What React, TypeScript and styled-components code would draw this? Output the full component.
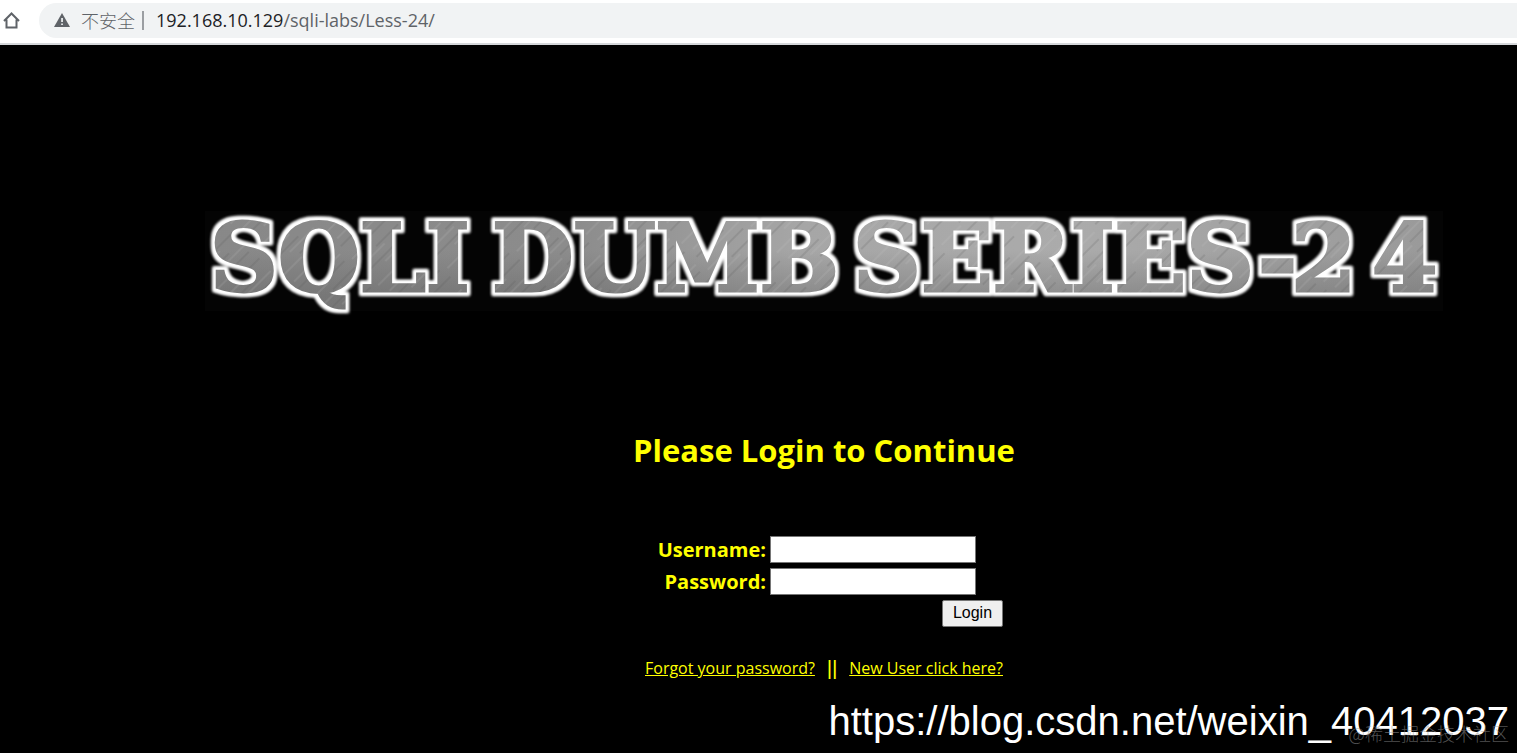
import React from "react";
import styled, { createGlobalStyle } from "styled-components";

const GlobalStyle = createGlobalStyle`
  * { box-sizing: border-box; }
  html, body, #root { min-height: 100vh; }
  body {
    margin: 0;
    background: #000;
    font-family: "Open Sans", "Noto Sans", "Noto Sans CJK SC", sans-serif;
  }
`;

const Page = styled.div`
  display: flex;
  flex-direction: column;
  min-height: 100vh;
  position: relative;
`;

const BrowserBar = styled.header`
  display: flex;
  align-items: center;
  gap: 17px;
  height: 45px;
  padding: 0 0 3px 2px;
  background: #fff;
  border-bottom: 2px solid #d5d7da;
`;

const IconButton = styled.button`
  display: flex;
  padding: 0;
  border: 0;
  background: none;
  color: #5f6368;
`;

const AddressBar = styled.div`
  display: flex;
  flex: 1;
  align-items: center;
  height: 35px;
  padding-left: 15px;
  border-radius: 18px 0 0 18px;
  background: #f1f3f4;
  color: #5f6368;
  font-size: 18px;
  line-height: 24px;
  white-space: nowrap;
`;

const Security = styled.span`
  margin-left: 11px;
  padding-right: 7px;
  font-family: "Noto Sans CJK SC", sans-serif;
  font-weight: 300;
`;

const Divider = styled.span`
  width: 2px;
  height: 19px;
  margin-right: 12px;
  background: #9b9ea2;
`;

const Host = styled.span`
  color: #202124;
`;

const Main = styled.main`
  display: flex;
  flex: 1;
  flex-direction: column;
  align-items: center;
  padding: 156px 0 0 131px;
  color: #ff0;
`;

const Banner = styled.svg`
  display: block;
  width: 90%;
  max-width: 1238px;
`;

const Title = styled.h1`
  margin: 109px 0 0;
  font-size: 31px;
  line-height: 44px;
  font-weight: 700;
`;

const LoginForm = styled.form`
  display: flex;
  flex-direction: column;
  gap: 5px;
  width: 358px;
  margin-top: 64px;
`;

const Field = styled.div`
  display: grid;
  grid-template-columns: 121px 206px;
  column-gap: 4px;
  align-items: center;
`;

const Label = styled.label`
  padding-top: 1px;
  font-size: 20px;
  line-height: 26px;
  font-weight: 700;
  text-align: right;
`;

const Input = styled.input`
  width: 100%;
  height: 27px;
  padding: 1px 2px;
  border: 1px solid #767676;
  border-radius: 0;
  background: #fff;
  font-size: 16px;
`;

const LoginButton = styled.button`
  align-self: flex-end;
  width: 61px;
  height: 27px;
  padding: 0 0 2px;
  border: 1px solid #767676;
  border-radius: 2px;
  background: #efefef;
  color: #000;
  font: 16px/22px "Liberation Sans", Arial, sans-serif;
`;

const Links = styled.nav`
  display: flex;
  justify-content: space-between;
  align-items: center;
  width: 358px;
  margin-top: 27px;
  font-size: 16px;
  line-height: 28px;
  white-space: nowrap;
`;

const Link = styled.a`
  color: #ff0;
`;

const Bars = styled.span`
  font-family: "Liberation Sans", Arial, sans-serif;
  font-size: 21px;
`;

const BlogMark = styled.div`
  position: absolute;
  right: 8px;
  bottom: 9px;
  color: #fff;
  font: 40px/46px "Liberation Sans", Arial, sans-serif;
`;

const CommunityMark = styled.div`
  position: absolute;
  right: 8px;
  bottom: 7px;
  color: rgba(150, 150, 150, 0.55);
  font: 300 18px/26px "Noto Sans CJK SC", sans-serif;
`;

const HomeIcon = () => (
  <svg width="20" height="20" viewBox="0 0 20 20" fill="none" stroke="currentColor" strokeWidth="2">
    <path d="M2 11 9.500 3.500 17 11M4.500 9.500V17.500H14.500V9.500" />
  </svg>
);

const WarningIcon = () => (
  <svg width="16" height="14" viewBox="0 0 16 14">
    <path d="M8 0 16 14H0Z" fill="#5f6368" />
    <path d="M7.200 5h1.700v4H7.200zM7.200 10.500h1.700v1.600H7.200z" fill="#f1f3f4" />
  </svg>
);

const words = [
  { text: "SQLI", x: "5" },
  { text: "DUMB", x: "287" },
  { text: "SERIES", x: "648" },
  { text: "-24", x: "1053 1086 1167" },
];

const BannerArt = () => (
  <Banner viewBox="0 0 1238 118" role="img" aria-label="SQLI DUMB SERIES-24">
    <defs>
      <linearGradient id="steel" x1="0" y1="0" x2="1238" y2="0" gradientUnits="userSpaceOnUse">
        <stop offset="0" stopColor="#888" />
        <stop offset="0.3" stopColor="#8c8c8c" />
        <stop offset="0.48" stopColor="#a6a6a6" />
        <stop offset="0.7" stopColor="#ababab" />
        <stop offset="1" stopColor="#999" />
      </linearGradient>
      <linearGradient id="shade" x1="0" y1="20" x2="0" y2="95" gradientUnits="userSpaceOnUse">
        <stop offset="0.4" stopColor="#555" stopOpacity="0" />
        <stop offset="1" stopColor="#555" stopOpacity="0.35" />
      </linearGradient>
      <pattern id="scratches" width="37" height="61" patternUnits="userSpaceOnUse" patternTransform="rotate(45)">
        <path d="M5 2v31M17 20v38M30 5v26" stroke="#555" strokeOpacity="0.35" />
        <path d="M9 25v30M22 3v34M34 32v27" stroke="#ccc" strokeOpacity="0.25" />
      </pattern>
      <pattern id="brushed" width="1238" height="118" patternUnits="userSpaceOnUse">
        <rect width="1238" height="118" fill="url(#steel)" />
        <rect width="1238" height="118" fill="url(#shade)" />
        <rect width="1238" height="118" fill="url(#scratches)" />
      </pattern>
      <filter id="rim" x="0" y="0" width="1238" height="118" filterUnits="userSpaceOnUse" colorInterpolationFilters="sRGB">
        <feMorphology in="SourceAlpha" operator="dilate" radius="3" result="wide" />
        <feGaussianBlur in="wide" stdDeviation="1.500" result="soft" />
        <feFlood floodColor="#fff" />
        <feComposite in2="soft" operator="in" result="halo" />
        <feMerge>
          <feMergeNode in="halo" />
          <feMergeNode in="halo" />
          <feMergeNode in="SourceGraphic" />
        </feMerge>
      </filter>
    </defs>
    <rect y="10" width="1238" height="100" fill="#040404" />
    <g
      fontFamily="DejaVu Serif"
      fontWeight="700"
      fontSize="94"
      fill="url(#brushed)"
      stroke="url(#brushed)"
      strokeWidth="3"
      filter="url(#rim)"
    >
      {words.map((word) => (
        <text key={word.text} x={word.x} y="90">
          {word.text}
        </text>
      ))}
    </g>
  </Banner>
);

export default function App() {
  return (
    <Page>
      <GlobalStyle />
      <BrowserBar>
        <IconButton type="button" aria-label="Home">
          <HomeIcon />
        </IconButton>
        <AddressBar>
          <WarningIcon />
          <Security>不安全</Security>
          <Divider />
          <Host>192.168.10.129</Host>
          <span>/sqli-labs/Less-24/</span>
        </AddressBar>
      </BrowserBar>
      <Main>
        <BannerArt />
        <Title>Please Login to Continue</Title>
        <LoginForm onSubmit={(event) => event.preventDefault()}>
          <Field>
            <Label htmlFor="username">Username:</Label>
            <Input id="username" type="text" />
          </Field>
          <Field>
            <Label htmlFor="password">Password:</Label>
            <Input id="password" type="password" />
          </Field>
          <LoginButton type="submit">Login</LoginButton>
        </LoginForm>
        <Links>
          <Link href="#forgot">Forgot your password?</Link>
          <Bars>||</Bars>
          <Link href="#new-user">New User click here?</Link>
        </Links>
      </Main>
      <BlogMark>https://blog.csdn.net/weixin_40412037</BlogMark>
      <CommunityMark>@稀土掘金技术社区</CommunityMark>
    </Page>
  );
}
